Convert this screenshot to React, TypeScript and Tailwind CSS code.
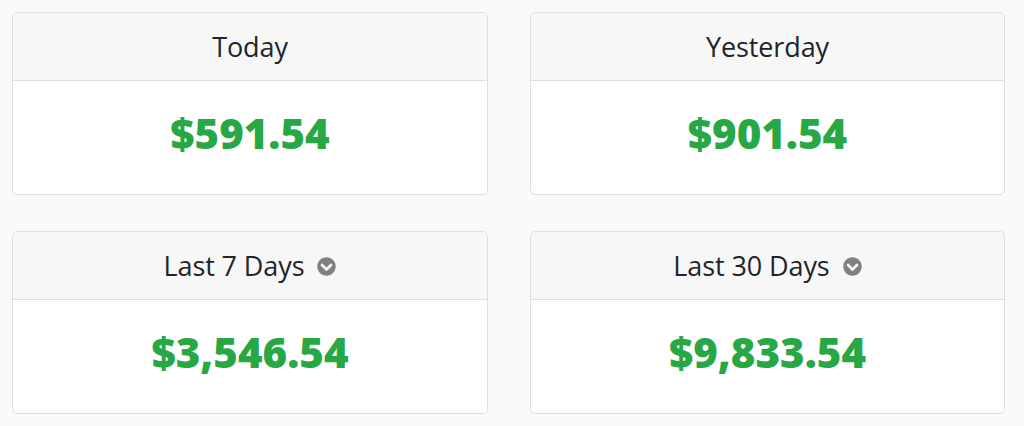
import { FaChevronCircleDown } from "react-icons/fa";

interface StatCardProps { title: string; amount: string; dropdown?: boolean; }

function StatCard({ title, amount, dropdown }: StatCardProps) {
  return (
    <div className="bg-white border border-[#dfdfdf] rounded-[5px] overflow-hidden text-center">
      <div className="h-[68px] bg-[#f7f7f7] border-b border-[#dfdfdf] flex items-center justify-center gap-[13px]">
        <span className="text-[27px] text-[#212529] leading-none tracking-[-0.1px]">{title}</span>
        {dropdown && <FaChevronCircleDown className="text-[#808080] w-[19px] h-[19px] mt-[2px]" />}
      </div>
      <div className="h-[113px] flex items-center justify-center pb-[10px]">
        <span className="text-[42px] font-extrabold text-[#28a745] leading-none">{amount}</span>
      </div>
    </div>
  );
}

export default function App() {
  const stats = [
    { title: "Today", amount: "$591.54" },
    { title: "Yesterday", amount: "$901.54" },
    { title: "Last 7 Days", amount: "$3,546.54", dropdown: true },
    { title: "Last 30 Days", amount: "$9,833.54", dropdown: true },
  ];
  return (
    <div className="min-h-[426px] bg-[#fafafa] pt-[12px] pl-[12px] font-['Open_Sans',sans-serif]">
      <div className="grid grid-cols-[476px_475px] gap-x-[42px] gap-y-[36px]">
        {stats.map((s) => (
          <StatCard key={s.title} title={s.title} amount={s.amount} dropdown={s.dropdown} />
        ))}
      </div>
    </div>
  );
}
